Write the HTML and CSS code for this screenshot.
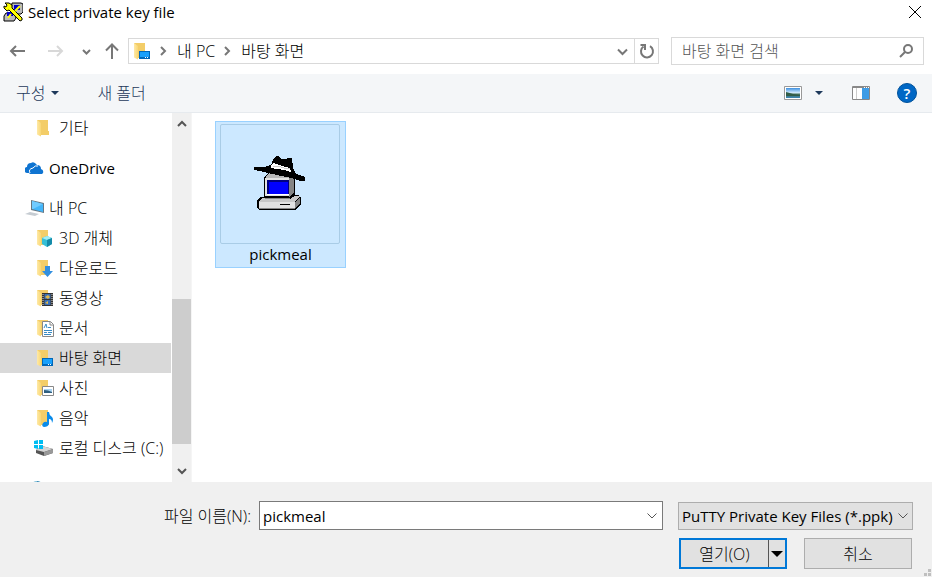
FILE: index.html
```html
<!DOCTYPE html>
<html lang="ko">
<head>
<meta charset="utf-8">
<title>Select private key file</title>
<link rel="stylesheet" href="styles.css">
</head>
<body>
<svg class="defs" aria-hidden="true">
  <defs>
    <linearGradient id="flap" x1="0" x2="1"><stop offset="0" stop-color="#ffe9a6"/><stop offset="1" stop-color="#f8d775"/></linearGradient>
    <linearGradient id="sky" x1="0" x2="0" y1="0" y2="1"><stop offset="0" stop-color="#3c8fe0"/><stop offset=".5" stop-color="#d8efff"/><stop offset=".6" stop-color="#44705a"/><stop offset="1" stop-color="#3a86b8"/></linearGradient>
  </defs>
  <symbol id="folder" viewBox="0 0 18 18">
    <path d="M1 1h11v11h1v4H3z" fill="#f3cd68"/>
    <path d="M1 1l4 3v13.500l-4-2z" fill="url(#flap)"/>
  </symbol>
  <symbol id="chevron" viewBox="0 0 12 12"><path d="M1.500 3.500l4.500 4.500 4.500-4.500" fill="none" stroke="currentColor"/></symbol>
  <symbol id="screen" viewBox="0 0 18 18">
    <path d="M6 9h11v8H6z" fill="#0067b8"/><path d="M7 10h9v5H7z" fill="#18a0fb"/><path d="M12 15.500h1M14 15.500h1" stroke="#fff"/>
  </symbol>
</svg>
<main class="dialog">
  <header class="titlebar">
    <svg class="app-icon" viewBox="0 0 20 20" aria-hidden="true">
      <path d="M9 1h9l2 1v8l-2 2h-8L8 9z" fill="#bbb" stroke="#000"/><path d="M11 3h6v5h-6z" fill="#00c"/>
      <path d="M1 14l2-3h8l2 5-2 3H1z" fill="#bbb" stroke="#000"/><path d="M4 10h6v4H4z" fill="#00c"/>
      <path d="M2 1l2 2-1 2-2-1v2l3 3 2-1 11 11 2-1v-2L9 6V3L6 1z" fill="#ff0" stroke="#000"/>
      <path d="M17 4l-5 5M8 12l-3 4" stroke="#ff0" stroke-width="2"/>
    </svg>
    <h1>Select private key file</h1>
    <button class="plain close" type="button" aria-label="닫기"><svg viewBox="0 0 14 14"><path d="M1 1l12 12M13 1L1 13" fill="none" stroke="#000"/></svg></button>
  </header>

  <nav class="navbar">
    <button class="plain back" type="button" aria-label="뒤로"><svg viewBox="0 0 18 14"><path d="M17 7H3M8 2L3 7l5 5"/></svg></button>
    <button class="plain forward" type="button" aria-label="앞으로"><svg viewBox="0 0 18 14"><path d="M2 7h14M11 2l5 5-5 5"/></svg></button>
    <button class="plain recent" type="button" aria-label="최근 위치"><svg viewBox="0 0 10 10"><path d="M2 4l3.500 3.500L9 4"/></svg></button>
    <button class="plain up" type="button" aria-label="위로"><svg viewBox="0 0 14 18"><path d="M7 17V3M1 8.500L7 2.500l6 6"/></svg></button>
    <div class="address ko">
      <svg class="icon" viewBox="0 0 18 18" aria-hidden="true"><use href="#folder"/><use href="#screen"/></svg>
      <svg class="sep" viewBox="0 0 8 10"><path d="M2 1l4 4-4 4"/></svg>
      <a href="#">내 PC</a>
      <svg class="sep" viewBox="0 0 8 10"><path d="M2 1l4 4-4 4"/></svg>
      <a href="#">바탕 화면</a>
      <button class="plain history" type="button" aria-label="이전 위치"><svg viewBox="0 0 12 12"><path d="M2 4.500l4.500 4.500L11 4.500"/></svg></button>
      <button class="plain refresh" type="button" aria-label="새로 고침"><svg viewBox="0 0 16 16"><path d="M11 3.200A6 6 0 1 1 4.500 3.500M1.500 2H6v5"/></svg></button>
    </div>
    <div class="search">
      <input class="ko" type="text" aria-label="바탕 화면 검색" placeholder="바탕 화면 검색">
      <svg viewBox="0 0 14 14" aria-hidden="true"><circle cx="9" cy="5" r="4"/><path d="M6 8l-5 5"/></svg>
    </div>
  </nav>

  <div class="toolbar">
    <button class="plain organize ko" type="button">구성<svg viewBox="0 0 8 4"><path d="M0 0h8L4 4z"/></svg></button>
    <button class="plain new ko" type="button">새 폴더</button>
    <button class="plain view" type="button" aria-label="보기 변경">
      <svg class="picture" viewBox="0 0 18 14"><path d="M.5.500h17v13H.500z" fill="#fff" stroke="#999"/><path d="M2 2h14v10H2z" fill="url(#sky)"/><path d="M2 6q4 1 7 2l7 1v1H2z" fill="#315d48"/></svg>
      <svg class="caret" viewBox="0 0 8 4"><path d="M0 0h8L4 4z"/></svg>
    </button>
    <button class="plain pane" type="button" aria-label="미리 보기 창"><svg viewBox="0 0 18 14"><path d="M.5.500h17v13H.500z" fill="#fff" stroke="#888"/><path d="M1 1.500h16" stroke="#888"/><path d="M4.500 2v11" stroke="#ccc"/><path d="M10 2h7v11h-7z" fill="#3e9ce6"/><path d="M12 1.500h1M14 1.500h1M16 1.500h1" stroke="#fff"/></svg></button>
    <button class="help" type="button" aria-label="도움말">?</button>
  </div>

  <div class="content">
    <aside class="side">
      <ul class="tree ko">
        <li class="child"><svg class="icon" viewBox="0 0 18 18"><use href="#folder"/></svg>기타</li>
        <li class="root latin"><svg class="cloud" viewBox="0 0 19 14"><path d="M4 12H3a3 3 0 0 1-1-6 4 4 0 0 1 4-4q3-2 6 2a4 4 0 0 1 4 4q3 1 2 4l-1 1H5z" fill="#0f74d1"/><path d="M5 12q-2-4 3-5 2-3 5-2" fill="none" stroke="#fff"/></svg>OneDrive</li>
        <li class="root"><svg class="pc" viewBox="0 0 19 18"><path d="M6 1l13 3v10L6 11z" fill="#657784"/><path d="M7 2l11 3v8L7 10z" fill="#42b5fa"/><path d="M7 2l11 3-10 5H7z" fill="#70cbff"/><path d="M0 15l5-2 9 2-4 2z" fill="#c6ccd2"/></svg>내 PC</li>
        <li class="child"><svg class="icon" viewBox="0 0 18 18"><use href="#folder"/><path d="M6 9l5-2 5 2v6l-5 3-5-3z" fill="#35bfd6"/><path d="M6 9l5-2 5 2-5 2z" fill="#a0edf5"/><path d="M11 11l5-2v6l-5 3z" fill="#158ba9"/></svg>3D 개체</li>
        <li class="child"><svg class="icon" viewBox="0 0 18 18"><use href="#folder"/><path d="M9 7h5v5h3l-5.500 6L6 12h3z" fill="#328fdf"/></svg>다운로드</li>
        <li class="child"><svg class="icon" viewBox="0 0 18 18"><use href="#folder"/><path d="M6 4h11v13H6z" fill="#333"/><path d="M8.500 5h6v5h-6zM8.500 11h6v5h-6z" fill="#3a70b8"/><path d="M9 8l3-2 2 2-2 2zM9 14l3-2v3z" fill="#e0b647"/><path d="M7 5v12M16 5v12" stroke="#ddd" stroke-dasharray="1 1"/></svg>동영상</li>
        <li class="child"><svg class="icon" viewBox="0 0 18 18"><use href="#folder"/><path d="M6.500 2.500h8l3 3v12h-11z" fill="#fff" stroke="#888"/><path d="M14 3v3h3" fill="none" stroke="#888"/><path d="M8 9l2-4 1 4M12 8.500h3M8 11.500h8M8 13.500h3M12 13.500h4M8 15.500h7" fill="none" stroke="#398bc5"/></svg>문서</li>
        <li class="child selected"><svg class="icon" viewBox="0 0 18 18"><use href="#folder"/><use href="#screen"/></svg>바탕 화면</li>
        <li class="child"><svg class="icon" viewBox="0 0 18 18"><use href="#folder"/><path d="M6.500 7.500h11v9h-11z" fill="#fff" stroke="#888"/><path d="M8 10h8v4H8z" fill="#a8d4f2"/><path d="M8 11q4 0 8 2v1H8z" fill="#2f5f80"/></svg>사진</li>
        <li class="child"><svg class="icon" viewBox="0 0 18 18"><use href="#folder"/><path d="M11 3h2q0 3 3 5 2 2 0 6 0-4-3-4v5q-1 3-5 3-3-1-1-4 2-2 4-1z" fill="#098bea"/></svg>음악</li>
        <li class="child drive"><svg class="disk" viewBox="0 0 20 16"><path d="M2 10l6-4 11 3v4l-9 3-8-3z" fill="#555"/><path d="M2 10l6-4 11 3-9 3z" fill="#d5d5d5"/><path d="M10 12l9-3v4l-9 3z" fill="#999"/><path d="M0 1l4-1v4H0zM5 0l4-1v5H5zM0 5h4v4l-4-1zM5 5h4v4H5z" fill="#00bdf2"/></svg>로컬 디스크 (C:)</li>
        <li class="root network"><svg class="pc" viewBox="0 0 19 18"><circle cx="12" cy="7" r="7" fill="#7cbdd8"/><path d="M12 0l3 1 3 5-5-1z" fill="#2b7fae"/></svg>네트워크</li>
      </ul>
      <div class="scrollbar" aria-hidden="true">
        <svg viewBox="0 0 10 8"><path d="M1 6l4-4 4 4"/></svg>
        <div class="track"><div class="thumb"></div></div>
        <svg viewBox="0 0 10 8"><path d="M1 2l4 4 4-4"/></svg>
      </div>
    </aside>
    <section class="files">
      <figure class="file">
        <div class="preview">
          <svg viewBox="0 0 54 56" aria-hidden="true" shape-rendering="crispEdges">
            <path d="M11 21l5-4h24l2 3v19h3l3 2v7l-5 6H6l-2-2v-8l3-3h4z" fill="#000"/>
            <path d="M13 20l4-3h18l7 5H13z" fill="#b8b8b8"/>
            <path d="M12 22h24v18H12z" fill="#e2e2e2"/>
            <path d="M36 22l5-1v16l-5 4z" fill="#858585"/>
            <path d="M14 24h22v14H14z" fill="#000080"/><path d="M16 26h19v12H16z" fill="#00f"/>
            <path d="M14 38h22v1H14z" fill="#fff"/>
            <path d="M6 46l3-4h3v1h25l5-3h5l-5 6z" fill="#c8c8c8"/>
            <path d="M6 46h36v6H6z" fill="#e2e2e2"/><path d="M42 46l5-5v6l-5 5z" fill="#858585"/>
            <path d="M12 42.500h25M6 52h36" stroke="#888"/><path d="M27 48.500h10" stroke="#000"/>
            <path d="M1 11h10l7-2 3-7 2-2h3l2 3h5l2-1h4l1 10 3 6 9 3v4h-5l-9-3-14-3-13-3-10-2z" fill="#000"/>
            <path d="M18 9l3-2 8 3 8 2 1 4-7-2-7-1-6-1z" fill="#fff"/><path d="M20 10h5l6 2h6" stroke="#ccc" fill="none"/>
          </svg>
        </div>
        <figcaption>pickmeal</figcaption>
      </figure>
    </section>
  </div>

  <form class="footer">
    <div class="fields">
      <label class="ko" for="name">파일 이름(N):</label>
      <div class="combo"><input id="name" type="text" value="pickmeal"><button class="plain" type="button" aria-label="목록"><svg><use href="#chevron"/></svg></button></div>
      <div class="filter"><select aria-label="파일 형식"><option>PuTTY Private Key Files (*.ppk)</option></select><svg><use href="#chevron"/></svg></div>
    </div>
    <div class="actions">
      <div class="open"><button class="ko" type="button">열기(O)</button><button class="more" type="button" aria-label="열기 옵션"><svg viewBox="0 0 12 6"><path d="M0 0h12L6 6z"/></svg></button></div>
      <button class="cancel ko" type="button">취소</button>
    </div>
    <svg class="grip" viewBox="0 0 8 8" aria-hidden="true"><path d="M4 0h3v3H4zM0 4h3v3H0zM4 4h3v3H4z" fill="#bfbfbf"/></svg>
  </form>
</main>
</body>
</html>
```
FILE: styles.css
```css
* { box-sizing: border-box; }
body, button, input, select {
  font-family: "Open Sans", "Noto Sans CJK KR", sans-serif;
  font-size: 15px;
  line-height: 20px;
  color: #000;
}
body { margin: 0; background: #fff; }
h1, ul, figure { margin: 0; padding: 0; }
button, input, select { margin: 0; padding: 0; border-radius: 0; }
svg { display: block; flex: none; }
.ko { font-size: 16px; font-weight: 300; }
.latin { font-size: 15px; font-weight: 400; }
.defs { position: absolute; width: 0; height: 0; }
.plain { border: 0; background: none; display: flex; align-items: center; justify-content: center; }
.dialog { min-height: 100vh; display: flex; flex-direction: column; }

.titlebar { display: flex; align-items: center; height: 24px; padding: 0 10px 0 3px; }
.app-icon { width: 20px; height: 20px; margin-right: 5px; }
.titlebar h1 { flex: 1; font-size: 15px; font-weight: 400; }
.close svg { width: 14px; height: 14px; }

.navbar { display: flex; align-items: center; height: 50px; padding: 4px 8px 0 8px; }
.navbar svg path, .navbar svg circle { fill: none; stroke: #777; stroke-width: 2; }
.navbar .icon path { stroke: none; }
.back svg, .forward svg { width: 18px; height: 14px; }
.forward { margin-left: 20px; }
.navbar .forward path { stroke: #d8d8d8; }
.recent { margin-left: 17px; }
.recent svg { width: 10px; height: 10px; }
.up { margin: 0 9px 0 14px; }
.up svg { width: 14px; height: 18px; }
.address { flex: 1; display: flex; align-items: center; height: 26px; border: 1px solid #d9d9d9; padding-left: 4px; }
.icon { width: 18px; height: 18px; }
.address a { color: #000; text-decoration: none; white-space: nowrap; }
.sep { width: 8px; height: 10px; margin: 0 10px 0 8px; }
.history { margin-left: auto; width: 24px; }
.history svg { width: 12px; height: 12px; }
.refresh { width: 24px; height: 24px; border-left: 1px solid #d9d9d9; }
.refresh svg { width: 16px; height: 16px; }
.search { width: 253px; height: 28px; margin-left: 12px; border: 1px solid #d9d9d9; display: flex; align-items: center; padding: 0 10px; }
.search input { flex: 1; min-width: 0; border: 0; outline: 0; background: none; }
.search input::placeholder { color: #555; opacity: 1; }
.search svg { width: 14px; height: 14px; }

.toolbar { display: flex; align-items: center; height: 39px; padding: 0 15px 0 16px; background: #f4f6f8; border-bottom: 1px solid #e6eaee; }
.toolbar button { color: #1e395b; }
.toolbar .caret, .organize svg { width: 8px; height: 4px; fill: #1e395b; }
.organize svg { margin-left: 6px; }
.new { margin-left: 38px; }
.view { margin-left: auto; gap: 13px; }
.picture, .pane svg { width: 18px; height: 14px; }
.pane { margin: 0 27px 0 29px; }
.toolbar .help { width: 20px; height: 20px; border: 1px solid #00529b; border-radius: 50%; background: #0067c5; color: #fff; font-weight: 600; line-height: 18px; }

.content { flex: 1; display: flex; min-height: 0; height: 369px; }
.side { display: flex; width: 192px; height: 369px; border-right: 1px solid #f5f5f5; overflow: hidden; }
.tree { flex: 1; min-width: 0; list-style: none; overflow: hidden; }
.tree li { display: flex; align-items: center; height: 30px; white-space: nowrap; }
.child { padding-left: 36px; gap: 5px; }
.root { padding-left: 25px; gap: 5px; }
.tree .root { margin-top: 10px; }
.tree .network { margin-top: 12px; }
.drive { padding-left: 34px; }
.cloud { width: 19px; height: 14px; }
.pc { width: 19px; height: 18px; }
.disk { width: 20px; height: 16px; }
.selected { background: #d9d9d9; }
.scrollbar { flex: none; width: 20px; border-left: 1px solid #fff; background: #f0f0f0; display: flex; flex-direction: column; align-items: center; padding: 7px 0; }
.scrollbar svg { width: 12px; height: 8px; fill: none; stroke: #555; stroke-width: 2; }
.track { flex: 1; width: 100%; display: flex; flex-direction: column; justify-content: flex-end; padding-bottom: 23px; }
.thumb { height: 145px; background: #cdcdcd; }

.files { flex: 1; padding: 8px 23px; }
.file { width: 131px; height: 147px; border: 1px solid #99d1ff; background: #cce8ff; padding: 2px 4px; text-align: center; }
.preview { display: flex; align-items: center; justify-content: center; width: 120px; height: 120px; border: 1px solid #a9cce6; border-radius: 2px; }
.preview svg { width: 54px; height: 56px; }

.footer { position: relative; height: 95px; padding: 19px 19px 0 20px; background: #f0f0f0; }
.fields { display: flex; align-items: center; }
.fields label { flex: none; width: 231px; text-align: right; }
.combo { flex: 1; min-width: 0; display: flex; height: 29px; margin: 0 15px 0 8px; border: 1px solid #7a7a7a; background: #fff; }
.combo input { flex: 1; min-width: 0; border: 0; outline: 0; padding: 0 3px; background: none; }
.combo button { width: 20px; }
.combo svg, .filter svg { width: 12px; height: 12px; color: #555; }
.filter { display: grid; align-items: center; width: 235px; height: 28px; }
.filter select, .filter svg { grid-area: 1 / 1; }
.filter select { appearance: none; width: 100%; height: 28px; border: 1px solid #adadad; background: #e1e1e1; padding: 0 3px; }
.filter svg { justify-self: end; margin-right: 4px; pointer-events: none; }
.actions { display: flex; justify-content: flex-end; gap: 17px; margin: 8px 1px 0 0; }
.open { display: flex; align-items: center; width: 108px; height: 31px; border: 2px solid #0078d7; background: #e1e1e1; }
.open button { flex: 1; height: 27px; border: 0; background: none; }
.open .more { flex: none; width: 17px; border-left: 1px solid #555; display: flex; align-items: center; justify-content: center; }
.more svg { width: 12px; height: 6px; }
.cancel { width: 108px; height: 31px; border: 1px solid #adadad; background: #e1e1e1; }
.grip { position: absolute; right: 0; bottom: 0; width: 8px; height: 8px; }
```
